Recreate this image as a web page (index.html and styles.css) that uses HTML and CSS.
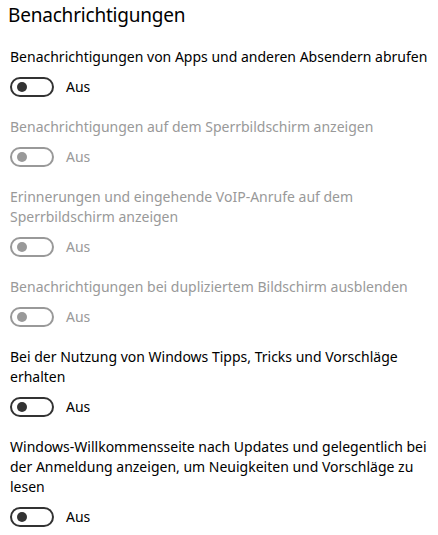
FILE: index.html
```html
<!DOCTYPE html>
<html lang="de">
<head>
<meta charset="utf-8">
<link rel="stylesheet" href="styles.css">
</head>
<body>
<div class="page">
  <h1 class="title">Benachrichtigungen</h1>
  <div class="setting">
    <div class="label">Benachrichtigungen von Apps und anderen Absendern abrufen</div>
    <div class="toggle-row"><span class="toggle"><span class="knob"></span></span><span class="state">Aus</span></div>
  </div>
  <div class="setting disabled">
    <div class="label">Benachrichtigungen auf dem Sperrbildschirm anzeigen</div>
    <div class="toggle-row"><span class="toggle"><span class="knob"></span></span><span class="state">Aus</span></div>
  </div>
  <div class="setting disabled">
    <div class="label">Erinnerungen und eingehende VoIP-Anrufe auf dem Sperrbildschirm anzeigen</div>
    <div class="toggle-row"><span class="toggle"><span class="knob"></span></span><span class="state">Aus</span></div>
  </div>
  <div class="setting disabled">
    <div class="label">Benachrichtigungen bei dupliziertem Bildschirm ausblenden</div>
    <div class="toggle-row"><span class="toggle"><span class="knob"></span></span><span class="state">Aus</span></div>
  </div>
  <div class="setting">
    <div class="label">Bei der Nutzung von Windows Tipps, Tricks und Vorschläge erhalten</div>
    <div class="toggle-row"><span class="toggle"><span class="knob"></span></span><span class="state">Aus</span></div>
  </div>
  <div class="setting">
    <div class="label">Windows-Willkommensseite nach Updates und gelegentlich bei der Anmeldung anzeigen, um Neuigkeiten und Vorschläge zu lesen</div>
    <div class="toggle-row"><span class="toggle"><span class="knob"></span></span><span class="state">Aus</span></div>
  </div>
</div>
</body>
</html>
```
FILE: styles.css
```css
html, body { margin: 0; padding: 0; background: #fff; }
body { font-family: "Noto Sans", "Open Sans", sans-serif; color: #000; }
.page { padding: 0 8px 0 10px; width: 420px; }
.title { margin: 0 0 0 -2px; padding-top: 2px; font-size: 19px; letter-spacing: -0.2px; font-weight: 400; line-height: 26px; height: 45px; }
.setting { margin-bottom: 20px; }
.label { font-size: 14px; line-height: 20px; }
.toggle-row { display: flex; align-items: center; margin-top: 10px; height: 20px; }
.toggle { box-sizing: border-box; width: 44px; height: 20px; border: 2px solid #333; border-radius: 10px; display: flex; align-items: center; padding-left: 5px; }
.knob { width: 10px; height: 10px; border-radius: 50%; background: #333; }
.state { margin-left: 12px; font-size: 14px; line-height: 20px; }
.disabled { color: #999; }
.disabled .toggle { border-color: #999; }
.disabled .knob { background: #999; }
```
